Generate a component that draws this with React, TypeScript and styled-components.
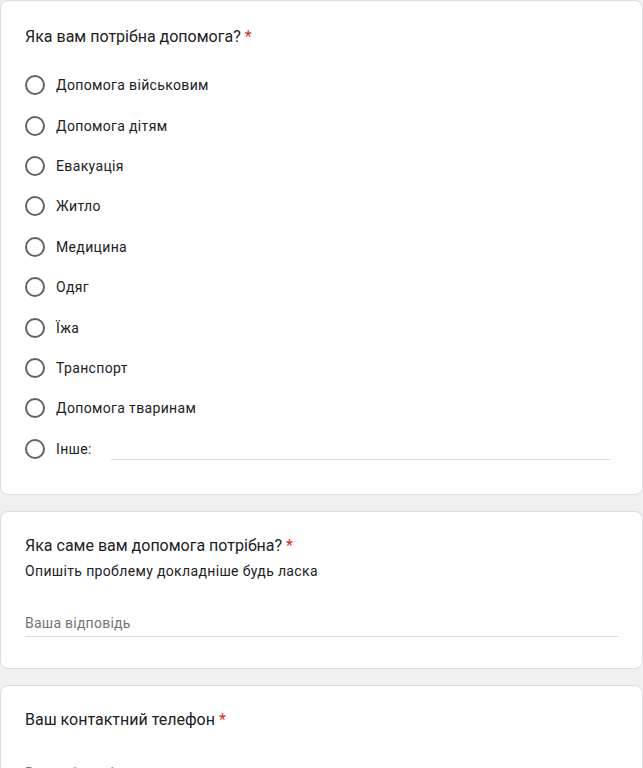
import React from "react";
import styled, { createGlobalStyle } from "styled-components";

const Global = createGlobalStyle`
  html, body { margin: 0; padding: 0; background: #f0f0f0; }
  body { font-family: Roboto, "Noto Sans", Arial, sans-serif; color: #202124; }
  * { box-sizing: border-box; }
`;

const Page = styled.div`
  display: flex;
  flex-direction: column;
  gap: 16px;
  width: 643px;
`;

const Card = styled.section<{ $top?: number }>`
  background: #fff;
  border: 1px solid #dadce0;
  border-radius: 8px;
  padding: ${(p) => p.$top ?? 24}px 24px 24px;
`;

const Title = styled.div`
  font-size: 16px;
  line-height: 24px;
  letter-spacing: 0;
  color: #202124;
`;

const Star = styled.span`
  color: #d93025;
  margin-left: 4px;
`;

const Description = styled.div`
  font-size: 14px;
  line-height: 20px;
  letter-spacing: 0.35px;
  margin-top: 3px;
  color: #202124;
`;

const Options = styled.div`
  display: flex;
  flex-direction: column;
  margin-top: 16px;
  margin-bottom: 1px;
`;

const Option = styled.label`
  display: flex;
  align-items: center;
  height: 40.4px;
`;

const Radio = styled.span`
  width: 20px;
  height: 20px;
  border-radius: 50%;
  border: 2px solid #5f6368;
  flex: none;
`;

const OptionLabel = styled.span`
  margin-left: 11px;
  font-size: 14px;
  letter-spacing: 0.35px;
  color: #202124;
`;

const OtherLine = styled.span`
  flex: 1;
  align-self: flex-end;
  margin: 0 8px 9px 19px;
  border-bottom: 1px solid #dadce0;
`;

const Answer = styled.div<{ $top: number }>`
  margin-top: ${(p) => p.$top}px;
  padding-bottom: 7px;
`;

const AnswerField = styled.div`
  font-size: 14px;
  line-height: 20px;
  letter-spacing: 0.25px;
  color: #70757a;
  padding-bottom: 3px;
  border-bottom: 1px solid #dadce0;
`;

const options = [
  "Допомога військовим",
  "Допомога дітям",
  "Евакуація",
  "Житло",
  "Медицина",
  "Одяг",
  "Їжа",
  "Транспорт",
  "Допомога тваринам",
];

export default function App() {
  return (
    <>
      <Global />
      <Page>
        <Card>
          <Title>
            Яка вам потрібна допомога?<Star>*</Star>
          </Title>
          <Options>
            {options.map((o) => (
              <Option key={o}>
                <Radio />
                <OptionLabel>{o}</OptionLabel>
              </Option>
            ))}
            <Option>
              <Radio />
              <OptionLabel>Інше:</OptionLabel>
              <OtherLine />
            </Option>
          </Options>
        </Card>
        <Card $top={22}>
          <Title>
            Яка саме вам допомога потрібна?<Star>*</Star>
          </Title>
          <Description>Опишіть проблему докладніше будь ласка</Description>
          <Answer $top={32}>
            <AnswerField>Ваша відповідь</AnswerField>
          </Answer>
        </Card>
        <Card $top={22}>
          <Title>
            Ваш контактний телефон<Star>*</Star>
          </Title>
          <Answer $top={31}>
            <AnswerField>Ваша відповідь</AnswerField>
          </Answer>
        </Card>
      </Page>
    </>
  );
}
